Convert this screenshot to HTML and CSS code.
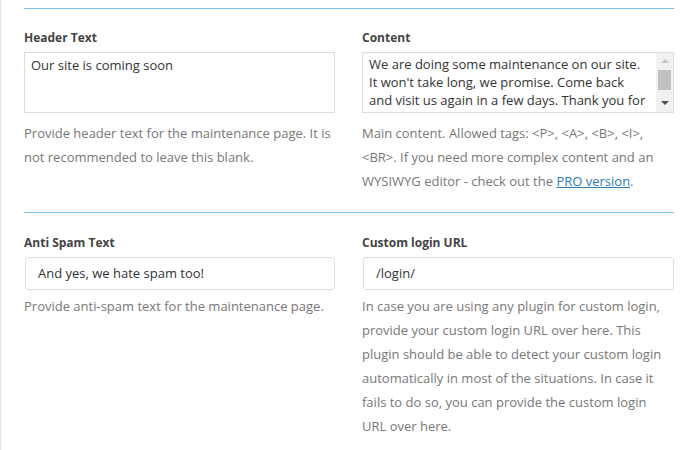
FILE: index.html
```html
<!DOCTYPE html>
<html>
<head>
<meta charset="utf-8">
<link rel="stylesheet" href="styles.css">
</head>
<body>
<div class="page">
  <section class="row first">
    <div class="field">
      <div class="label">Header Text</div>
      <div class="textarea">Our site is coming soon</div>
      <p class="help">Provide header text for the maintenance page. It is not recommended to leave this blank.</p>
    </div>
    <div class="field">
      <div class="label">Content</div>
      <div class="textarea scroll">
        <div class="ta-text">We are doing some maintenance on our site. It won't take long, we promise. Come back and visit us again in a few days. Thank you for your patience!</div>
        <div class="sbar">
          <span class="arrow up"></span>
          <span class="thumb"></span>
          <span class="arrow down"></span>
        </div>
      </div>
      <p class="help">Main content. Allowed tags: &lt;P&gt;, &lt;A&gt;, &lt;B&gt;, &lt;I&gt;, &lt;BR&gt;. If you need more complex content and an WYSIWYG editor - check out the <a href="#">PRO version</a>.</p>
    </div>
  </section>
  <section class="row second">
    <div class="field">
      <div class="label">Anti Spam Text</div>
      <div class="input">And yes, we hate spam too!</div>
      <p class="help">Provide anti-spam text for the maintenance page.</p>
    </div>
    <div class="field">
      <div class="label">Custom login URL</div>
      <div class="input">/login/</div>
      <p class="help">In case you are using any plugin for custom login, provide your custom login URL over here. This plugin should be able to detect your custom login automatically in most of the situations. In case it fails to do so, you can provide the custom login URL over here.</p>
    </div>
  </section>
</div>
</body>
</html>
```
FILE: styles.css
```css
html, body {
  margin: 0;
  padding: 0;
  background: #fff;
}
body {
  font-family: "Open Sans", "Noto Sans", sans-serif;
  font-size: 13px;
  color: #555;
}
.page {
  border-left: 1px solid #e6e6e6;
  min-height: 450px;
  box-sizing: border-box;
  padding: 8px 11px 0 23px;
}
.row {
  border-top: 1px solid #74c3ec;
  display: grid;
  grid-template-columns: 311px 312px;
  column-gap: 27px;
}
.row.first {
  padding-top: 21px;
  height: 204px;
  box-sizing: border-box;
}
.row.second {
  padding-top: 22px;
}
.label {
  font-weight: bold;
  color: #444;
  font-size: 12px;
  line-height: 16px;
  margin-bottom: 6px;
}
.textarea {
  height: 61px;
  box-sizing: border-box;
  border: 1px solid #ddd;
  padding: 3px 6px;
  color: #333;
  font-size: 13px;
  line-height: 18px;
  overflow: hidden;
  position: relative;
}
.textarea.scroll {
  padding: 2px 25px 0 6px;
  box-shadow: inset 0 1px 2px rgba(0,0,0,0.04);
}
.sbar {
  position: absolute;
  top: 0;
  right: 0;
  bottom: 0;
  width: 17px;
  background: #f1f1f1;
}
.arrow {
  position: absolute;
  left: 5px;
  width: 0;
  height: 0;
  border-left: 4px solid transparent;
  border-right: 4px solid transparent;
}
.arrow.up {
  top: 6px;
  border-bottom: 4px solid #c4c4c4;
}
.arrow.down {
  bottom: 7px;
  border-top: 4px solid #505050;
}
.thumb {
  position: absolute;
  left: 2px;
  right: 2px;
  top: 17px;
  height: 20px;
  background: #c1c1c1;
}
.input {
  height: 33px;
  box-sizing: border-box;
  border: 1px solid #ddd;
  border-radius: 3px;
  padding: 0 12px;
  color: #333;
  font-size: 13px;
  line-height: 31px;
  margin-left: 1px;
}
.help {
  margin: 8px 0 0;
  font-size: 13px;
  line-height: 24px;
  color: #777;
}
.row.second .help {
  margin-top: 4px;
}
.help a {
  color: #2a7ab8;
  text-decoration: underline;
}
```
